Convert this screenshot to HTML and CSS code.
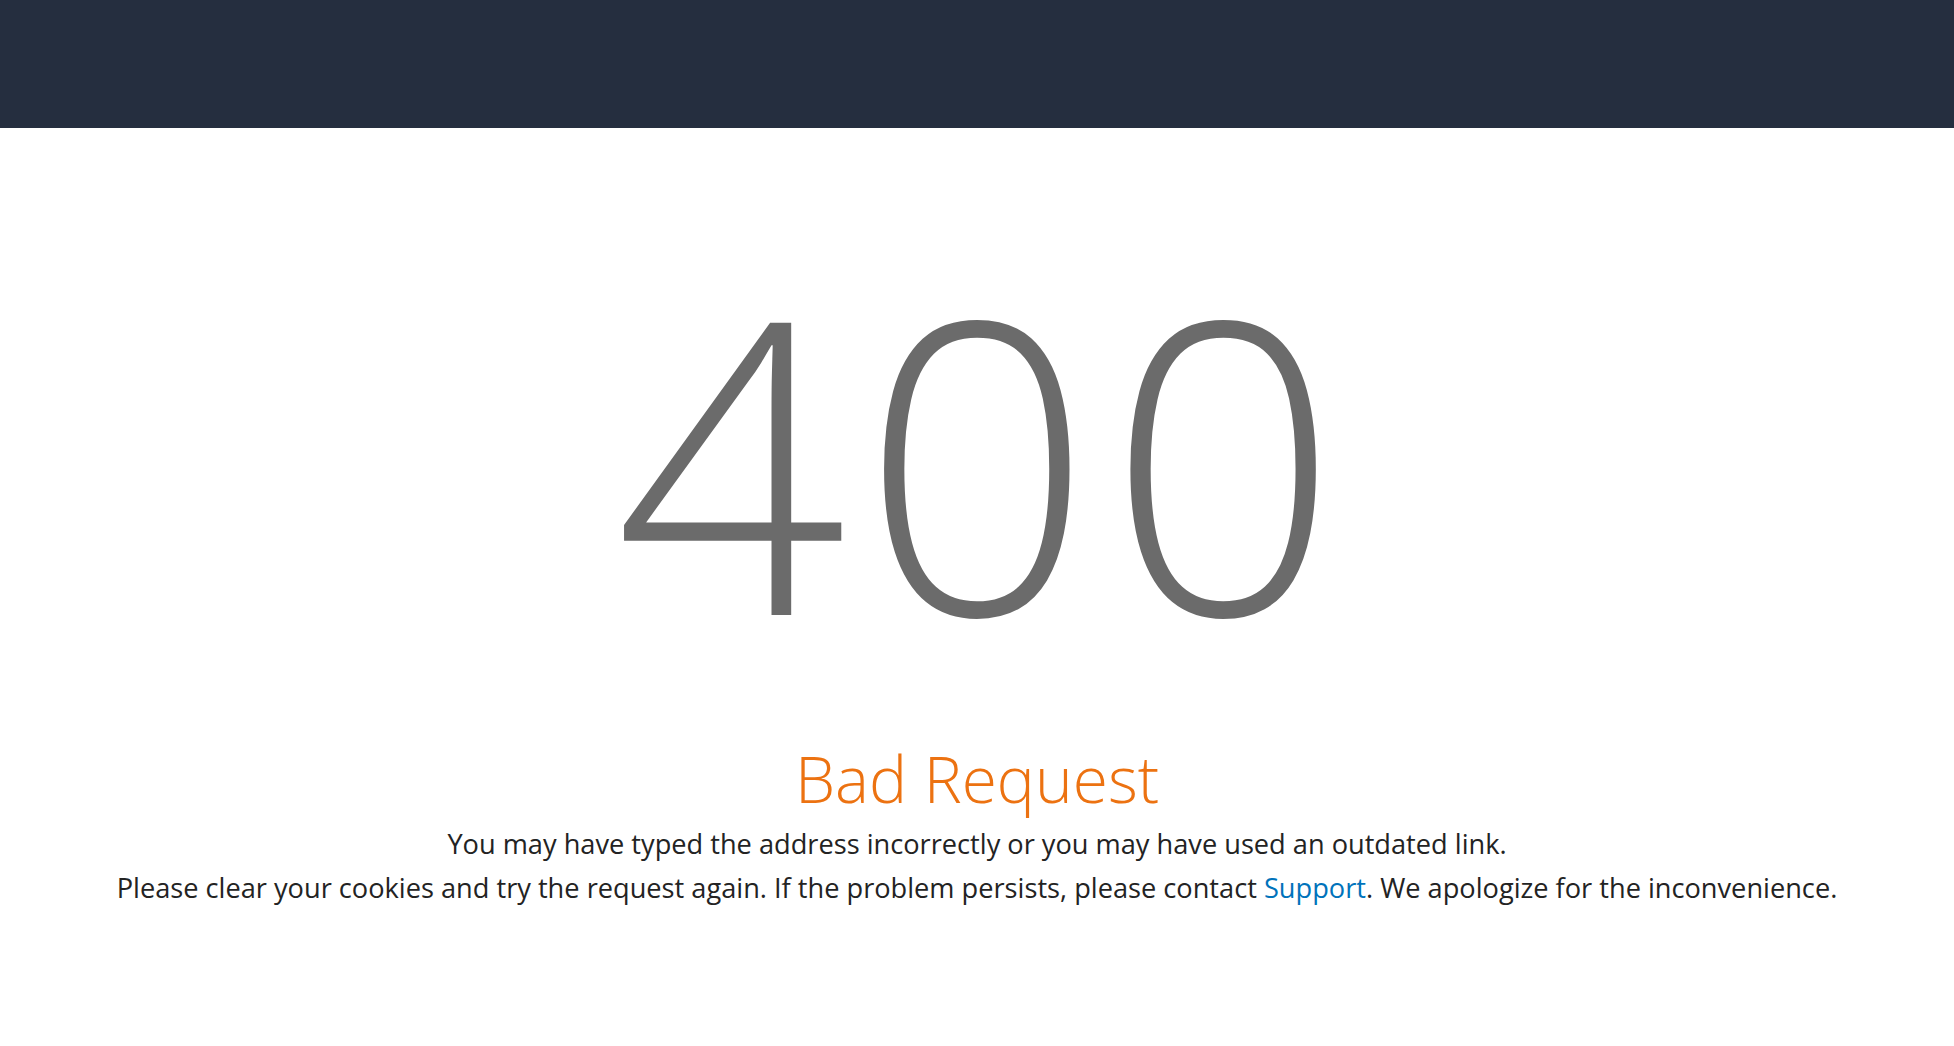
FILE: index.html
```html
<!DOCTYPE html>
<html lang="en">
<head>
<meta charset="UTF-8">
<meta name="viewport" content="width=device-width, initial-scale=1.0">
<title>400 Bad Request</title>
<link rel="stylesheet" href="styles.css">
</head>
<body>
<!-- 상단 바 -->
<header class="top-bar"></header>

<!-- 에러 내용 -->
<main class="error-page">
  <div class="error-code">400</div>
  <h1 class="error-title">Bad Request</h1>
  <p class="error-text">You may have typed the address incorrectly or you may have used an outdated link.</p>
  <p class="error-text">Please clear your cookies and try the request again. If the problem persists, please contact <a href="#">Support</a>. We apologize for the inconvenience.</p>
</main>
</body>
</html>
```
FILE: styles.css
```css
html, body {
    margin: 0;
    padding: 0;
    font-family: 'Open Sans', 'Noto Sans', sans-serif;
    background-color: #fff;
}

/* 상단 바 */
.top-bar {
    height: 128px;
    background-color: #252e3f;
}

/* 에러 영역 */
.error-page {
    display: flex;
    flex-direction: column;
    align-items: center;
    text-align: center;
    padding-top: 126px;
}

/* 큰 숫자 */
.error-code {
    font-size: 407px;
    font-weight: 300;
    line-height: 1;
    letter-spacing: 14px;
    padding-left: 14px; /* letter-spacing 뒤쪽 여백 보정 */
    color: #6b6b6b;
}

.error-title {
    margin: 79px 0 5px;
    font-size: 64px;
    font-weight: 300;
    line-height: 77px;
    color: #ec7211;
}

.error-text {
    margin: 0;
    font-size: 27.2px;
    line-height: 44px;
    color: #232323;
    white-space: nowrap;
}

.error-text a {
    color: #0073bb;
    text-decoration: none;
}
```
